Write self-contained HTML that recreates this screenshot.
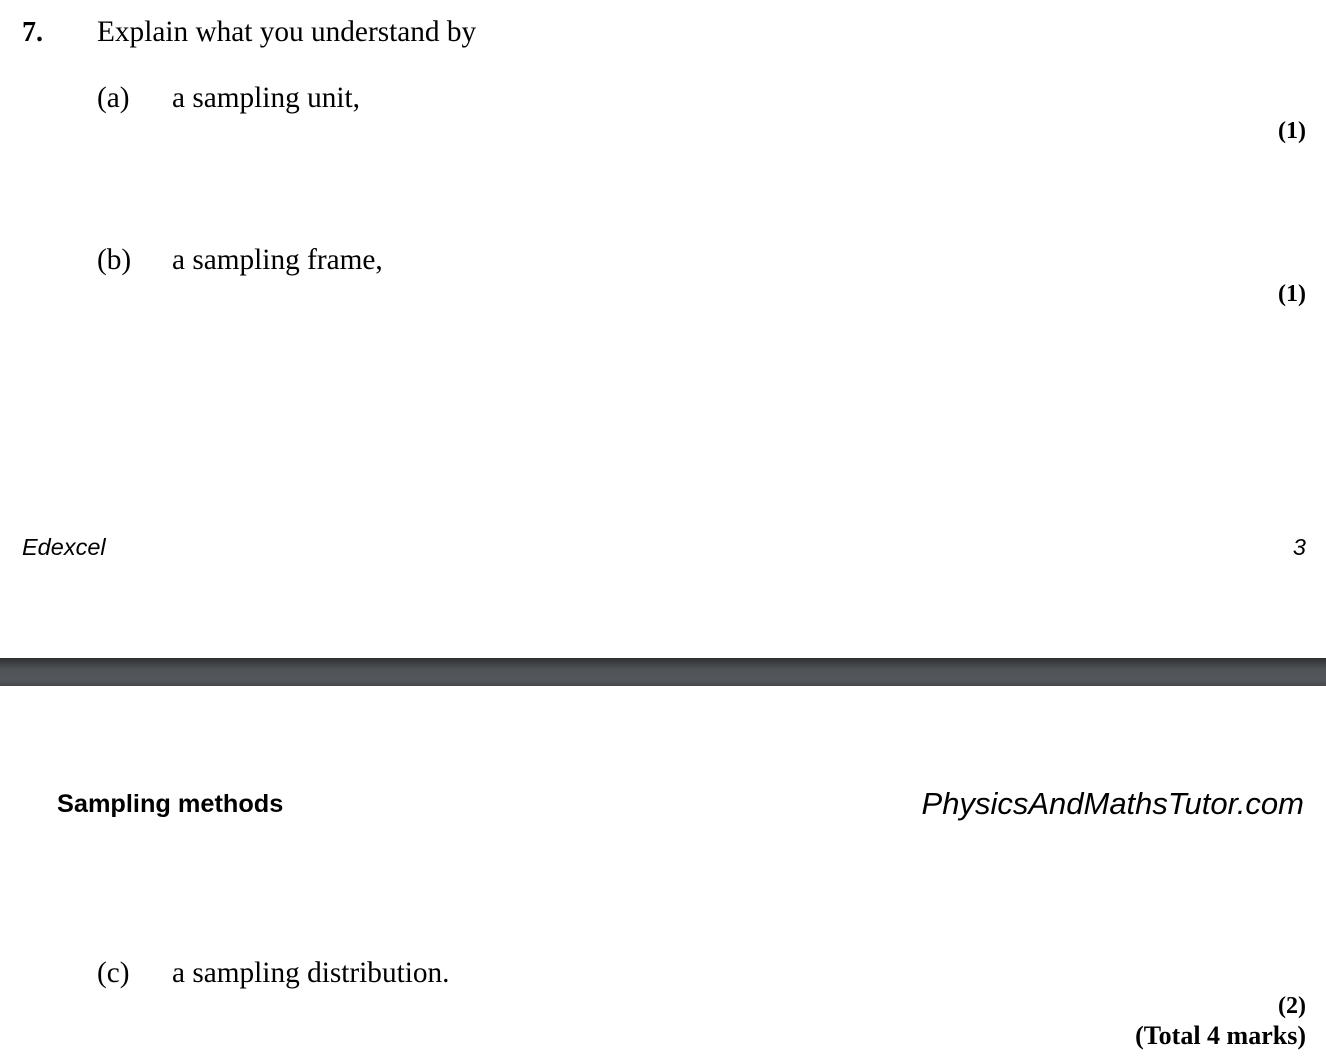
<!DOCTYPE html>
<html><head><style>
body{margin:0;width:1326px;height:1062px;background:#fff;position:relative;overflow:hidden;font-family:"Liberation Serif",serif;color:#000}
.t{position:absolute;white-space:nowrap;font-size:29.3px;line-height:1}
.b{font-weight:bold}
.m{font-size:24px;font-weight:bold;right:20px}
.s{font-family:"Liberation Sans",sans-serif}
</style></head><body>
<div class="t b" style="left:22px;top:19px;font-size:28px">7.</div>
<div class="t" style="left:97px;top:18px">Explain what you understand by</div>
<div class="t" style="left:97px;top:84px">(a)</div>
<div class="t" style="left:172px;top:84px">a sampling unit,</div>
<div class="t m" style="top:119px">(1)</div>
<div class="t" style="left:97px;top:246px">(b)</div>
<div class="t" style="left:172px;top:246px">a sampling frame,</div>
<div class="t m" style="top:282px">(1)</div>
<div class="t s" style="left:22px;top:536px;font-size:23.5px;font-style:italic">Edexcel</div>
<div class="t s" style="right:20px;top:536px;font-size:23.5px;font-style:italic">3</div>
<div style="position:absolute;left:0;top:658px;width:1326px;height:28px;background:linear-gradient(#2e2f31,#505357 40%,#53565a 80%,#46494c)"></div>
<div class="t s b" style="left:57px;top:792px;font-size:25.3px">Sampling methods</div>
<div class="t s" style="right:22px;top:788px;font-size:31px;font-style:italic">PhysicsAndMathsTutor.com</div>
<div class="t" style="left:97px;top:959px">(c)</div>
<div class="t" style="left:172px;top:959px">a sampling distribution.</div>
<div class="t m" style="top:994px">(2)</div>
<div class="t m" style="top:1023px;font-size:26px">(Total 4 marks)</div>
</body></html>
